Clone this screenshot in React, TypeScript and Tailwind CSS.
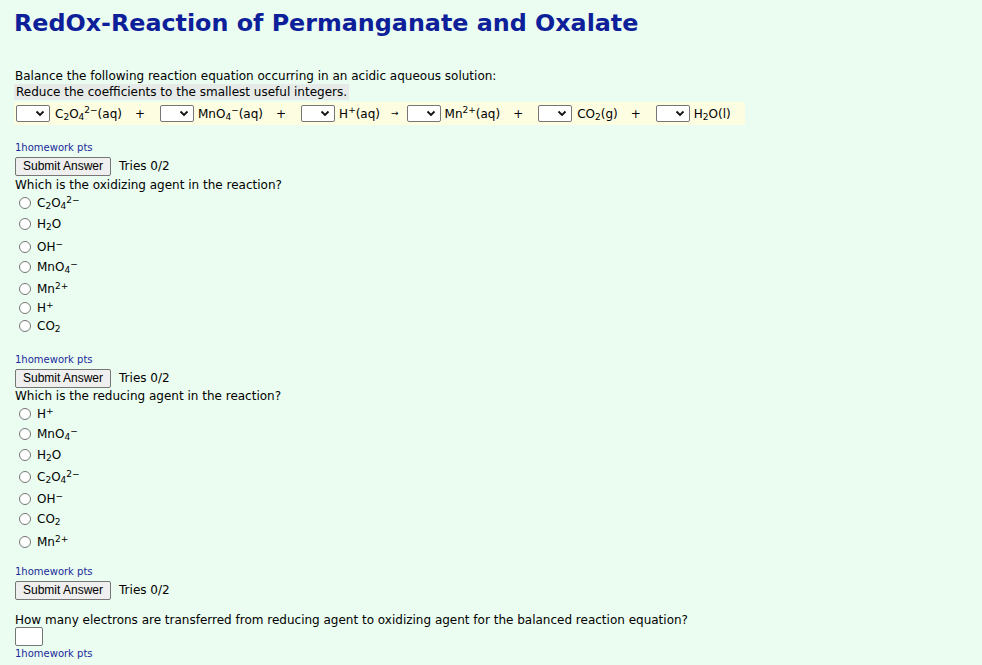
import React from "react";

const Sel = ({ className = "" }: { className?: string }) => (
  <span className={`inline-flex shrink-0 items-center justify-end w-[34px] h-[17px] border border-[#767676] rounded-[2px] bg-white pr-[4px] ${className}`}>
    <svg width="10" height="7" viewBox="0 0 10 7">
      <polyline points="1.5,1.5 5,5 8.5,1.5" fill="none" stroke="#111" strokeWidth="1.8" />
    </svg>
  </span>
);

const Plus = () => <span className="ml-[13px] mr-[15px]">+</span>;

const Radio = () => (
  <span className="inline-block w-[12px] h-[12px] rounded-full border border-[#767676] bg-white ml-[5px] mr-[6px]" />
);

const Pts = ({ className }: { className: string }) => (
  <div className={`h-[12px] leading-[12px] text-[10px] text-[#1a2a9c] ${className}`}>1homework pts</div>
);

const Submit = ({ className }: { className: string }) => (
  <div className={`flex items-center h-[19px] ${className}`}>
    <button className="h-[19px] px-[7px] border border-[#767676] rounded-[2px] bg-[#efefef] text-[12px] leading-[17px] text-black font-['Liberation_Sans',Arial,sans-serif] ml-[1px]">
      Submit Answer
    </button>
    <span className="ml-[8px] leading-[19px]">Tries 0/2</span>
  </div>
);

const Opt = ({ className, children }: { className: string; children: React.ReactNode }) => (
  <div className={`flex items-center h-[18px] ${className}`}>
    <Radio />
    <span>{children}</span>
  </div>
);

const C2O4 = () => (
  <>
    C<sub>2</sub>O<sub>4</sub>
    <sup>2−</sup>
  </>
);
const H2O = () => (
  <>
    H<sub>2</sub>O
  </>
);
const OH = () => (
  <>
    OH<sup>−</sup>
  </>
);
const MnO4 = () => (
  <>
    MnO<sub>4</sub>
    <sup>−</sup>
  </>
);
const Mn = () => (
  <>
    Mn<sup>2+</sup>
  </>
);
const H = () => (
  <>
    H<sup>+</sup>
  </>
);
const CO2 = () => (
  <>
    CO<sub>2</sub>
  </>
);

export default function App() {
  return (
    <div className="min-h-screen bg-[#ebfdf0] pl-[14px] pb-4 text-[12px] text-black whitespace-nowrap font-['DejaVu_Sans',Verdana,sans-serif] overflow-hidden">
      <h1 className="mt-[8px] h-[30px] leading-[30px] text-[23.8px] font-bold text-[#0e2099]">
        RedOx-Reaction of Permanganate and Oxalate
      </h1>

      <div className="mt-[31px] h-[14px] leading-[14px] pl-[1px]">
        Balance the following reaction equation occurring in an acidic aqueous solution:
      </div>
      <div className="mt-[1px] h-[16px] leading-[16px] w-fit bg-[#e6ebe9] pl-[2px] pr-[2px]">
        Reduce the coefficients to the smallest useful integers.
      </div>

      {/* equation */}
      <div className="mt-[2px] h-[23px] w-[731px] bg-[#fdfde2] flex items-center">
        <Sel className="ml-[2px]" />
        <span className="ml-[5px]">
          <C2O4 />
          (aq)
        </span>
        <Plus />
        <Sel />
        <span className="ml-[4px]">
          <MnO4 />
          (aq)
        </span>
        <Plus />
        <Sel />
        <span className="ml-[4px]">
          <H />
          (aq)
        </span>
        <span className="ml-[11px] mr-[8px] text-[9px]">→</span>
        <Sel />
        <span className="ml-[4px]">
          <Mn />
          (aq)
        </span>
        <Plus />
        <Sel />
        <span className="ml-[5px]">
          <CO2 />
          (g)
        </span>
        <Plus />
        <Sel />
        <span className="ml-[4px]">
          <H2O />
          (l)
        </span>
      </div>

      {/* question 1 */}
      <Pts className="mt-[17px] pl-[1px]" />
      <Submit className="mt-[3px]" />
      <div className="mt-[2px] h-[14px] leading-[14px] pl-[1px]">Which is the oxidizing agent in the reaction?</div>
      <Opt className="mt-[2px]"><C2O4 /></Opt>
      <Opt className="mt-[3px]"><H2O /></Opt>
      <Opt className="mt-[5px]"><OH /></Opt>
      <Opt className="mt-[2px]"><MnO4 /></Opt>
      <Opt className="mt-[4px]"><Mn /></Opt>
      <Opt className="mt-[1px]"><H /></Opt>
      <Opt className="mt-[0px]"><CO2 /></Opt>

      {/* question 2 */}
      <Pts className="mt-[19px] pl-[1px]" />
      <Submit className="mt-[3px]" />
      <div className="mt-[1px] h-[14px] leading-[14px] pl-[1px]">Which is the reducing agent in the reaction?</div>
      <Opt className="mt-[2px]"><H /></Opt>
      <Opt className="mt-[2px]"><MnO4 /></Opt>
      <Opt className="mt-[3px]"><H2O /></Opt>
      <Opt className="mt-[4px]"><C2O4 /></Opt>
      <Opt className="mt-[4px]"><OH /></Opt>
      <Opt className="mt-[2px]"><CO2 /></Opt>
      <Opt className="mt-[5px]"><Mn /></Opt>

      {/* question 3 */}
      <Pts className="mt-[15px] pl-[1px]" />
      <Submit className="mt-[3px]" />
      <div className="mt-[13px] h-[14px] leading-[14px] pl-[1px]">
        How many electrons are transferred from reducing agent to oxidizing agent for the balanced reaction equation?
      </div>
      <input type="text" className="block mt-0 ml-[1px] w-[28px] h-[19px] border border-[#767676] rounded-[2px] bg-white" />
      <Pts className="mt-[2px] pl-[1px]" />
    </div>
  );
}
